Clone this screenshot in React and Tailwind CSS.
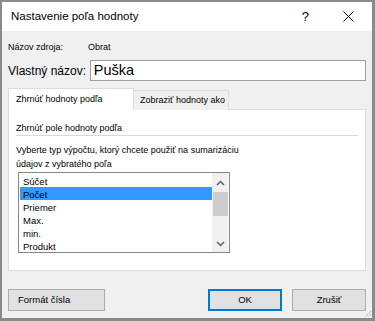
import { useState } from "react"

const items = ["Súčet", "Počet", "Priemer", "Max.", "min.", "Produkt"]

function Chevron({ up }) {
  return (
    <svg width="9" height="6" viewBox="0 0 9 6" className="block">
      <path d={up ? "M1 5 L4.5 1.5 L8 5" : "M1 1 L4.5 4.5 L8 1"} fill="none" stroke="#606060" strokeWidth="1.5" />
    </svg>
  )
}

function ListBox() {
  const [selected, setSelected] = useState(1)
  return (
    <div className="ml-[9px] mt-px w-[212px] h-[81px] border border-[#828790] bg-white flex">
      <div className="flex-1 pt-px pl-px">
        {items.map((item, i) => (
          <div
            key={item}
            onClick={() => setSelected(i)}
            className={`h-[13px] pl-[3px] pt-[1px] text-[9.5px] leading-[13px] ${i === selected ? "bg-[#3399ff] text-black" : ""}`}
          >
            {item}
          </div>
        ))}
      </div>
      <div className="w-[16px] mr-px bg-[#f0f0f0] flex flex-col items-center">
        <div className="h-[19px] flex items-center justify-center"><Chevron up /></div>
        <div className="w-[15px] h-[24px] bg-[#cdcdcd]" />
        <div className="flex-1" />
        <div className="h-[17px] flex items-center justify-center"><Chevron /></div>
      </div>
    </div>
  )
}

export default function App() {
  return (
    <div className="relative w-[375px] h-[321px] border-l-2 border-t-2 border-r-[3px] border-b-[3px] border-[#8a8a8a] flex flex-col font-['Liberation_Sans',Arial,sans-serif] text-black">
      {/* title bar */}
      <div className="h-[29px] bg-white flex items-center pl-[9px]">
        <span className="text-[11.5px]">Nastavenie poľa hodnoty</span>
        <span className="ml-auto mr-[34px] text-[13px]">?</span>
        <svg width="11" height="11" viewBox="0 0 11 11" className="mr-[18px]">
          <path d="M0.5 0.5 L10.5 10.5 M10.5 0.5 L0.5 10.5" stroke="#000" strokeWidth="1" />
        </svg>
      </div>

      <div className="flex-1 bg-[#f0f0f0] px-[6px] flex flex-col">
        <div className="mt-[11px] h-[12px] flex items-center text-[9px]">
          <span className="w-[80px]">Názov zdroja:</span>
          <span>Obrat</span>
        </div>

        <div className="mt-[6px] h-[21px] flex items-center">
          <span className="w-[82px] text-[12px]">Vlastný názov:</span>
          <div className="w-[277px] h-[21px] border border-[#a0a0a0] bg-white flex items-center pl-[3px] text-[14.5px]">
            Puška
          </div>
        </div>

        {/* tabs */}
        <div className="mt-[7px] flex items-end h-[22px] relative z-10">
          <div className="w-[126px] h-[22px] bg-white border border-b-0 border-[#dcdcdc] flex items-center pl-[7px] text-[9px]">
            Zhrnúť hodnoty podľa
          </div>
          <div className="w-[95px] h-[20px] bg-[#f0f0f0] border border-l-0 border-b-0 border-[#dcdcdc] flex items-center pl-[6px] text-[9px]">
            Zobraziť hodnoty ako
          </div>
        </div>
        <div className="-mt-px w-[358px] h-[162px] bg-white border border-[#dcdcdc] flex flex-col">
          <div className="mt-[13px] px-[7px] text-[9px] leading-[10px]">Zhrnúť pole hodnoty podľa</div>
          <div className="mx-[7px] mt-[2px] h-px bg-[#d7d7d7]" />
          <div className="mt-[7px] px-[7px] text-[9px] leading-[14px]">
            Vyberte typ výpočtu, ktorý chcete použiť na sumarizáciu
            <br />
            údajov z vybratého poľa
          </div>
          <ListBox />
        </div>

        {/* buttons */}
        <div className="mt-[18px] flex h-[22px]">
          <button className="w-[97px] h-[22px] bg-[#e1e1e1] border border-[#adadad] text-left pl-[9px] text-[9.5px]">
            Formát čísla
          </button>
          <button className="ml-auto w-[74px] h-[22px] bg-[#e1e1e1] border-2 border-[#0078d7] text-[9.5px]">
            OK
          </button>
          <button className="ml-[10px] w-[74px] h-[22px] bg-[#e1e1e1] border border-[#adadad] text-[9.5px]">
            Zrušiť
          </button>
        </div>
      </div>

      {/* resize grip */}
      <svg width="10" height="10" viewBox="0 0 10 10" className="absolute right-0 bottom-0">
        <path d="M9 3 L3 9 M9 6 L6 9" stroke="#9a9a9a" strokeWidth="1" strokeDasharray="1 1" />
      </svg>
    </div>
  )
}
